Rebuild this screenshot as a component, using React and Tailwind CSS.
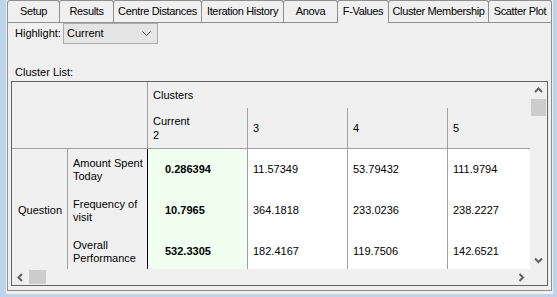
import React from 'react';

const tabs = [
  { label: 'Setup', cls: 'w-[53px]' },
  { label: 'Results', cls: 'w-[55px]' },
  { label: 'Centre Distances', cls: 'w-[89px]' },
  { label: 'Iteration History', cls: 'w-[83px]' },
  { label: 'Anova', cls: 'w-[55px]' },
  { label: 'F-Values', cls: 'w-[52px]', active: true },
  { label: 'Cluster Membership', cls: 'w-[101px]' },
  { label: 'Scatter Plot', cls: 'w-[64px]' },
];

const rows = [
  { label: ['Amount Spent', 'Today'], cur: '0.286394', vals: ['11.57349', '53.79432', '111.9794'] },
  { label: ['Frequency of', 'visit'], cur: '10.7965', vals: ['364.1818', '233.0236', '238.2227'] },
  { label: ['Overall', 'Performance'], cur: '532.3305', vals: ['182.4167', '119.7506', '142.6521'] },
];

function Chevron({ dir }) {
  const pts = {
    up: '1,5 4.5,1.5 8,5',
    down: '1,1.5 4.5,5 8,1.5',
    left: '5,1 1.5,4.5 5,8',
    right: '1.5,1 5,4.5 1.5,8',
  }[dir];
  const vertical = dir === 'up' || dir === 'down';
  return (
    <svg width={vertical ? 9 : 7} height={vertical ? 7 : 9} viewBox={vertical ? '0 0 9 7' : '0 0 7 9'}>
      <polyline points={pts} fill="none" stroke="#606060" strokeWidth="2" />
    </svg>
  );
}

function Tab({ tab }) {
  return (
    <div
      className={
        tab.cls +
        ' -ml-px first:ml-0 shrink-0 flex items-start justify-center pt-[4px] whitespace-nowrap tracking-[-0.35px] border-t border-l border-r border-[#8e8f8f] rounded-t-[3px] bg-[#f0f0f0] ' +
        (tab.active ? 'h-[23px] relative z-10' : 'h-[22px]')
      }
    >
      {tab.label}
    </div>
  );
}

export default function App() {
  return (
    <div className="w-[557px] h-[297px] bg-[#bed4eb] pl-[6px] pr-[4px] pb-[3px] font-['Liberation_Sans',Arial,sans-serif] text-[11px] leading-[13px] text-black">
      <div className="h-full bg-[#f0f0f0] flex flex-col">
        <div className="h-[22px] flex items-start pl-[1px] shrink-0">
          {tabs.map((t) => (
            <Tab key={t.label} tab={t} />
          ))}
        </div>

        <div className="ml-[1px] w-[545px] h-[269px] border border-[#8e8f8f] flex flex-col">
          <div className="flex items-center h-[21px]">
            <div className="w-[55px] pl-[7px]">Highlight:</div>
            <div className="w-[95px] h-[21px] border border-[#adadad] bg-[#e5e5e5] flex items-center justify-between pl-[3px] pr-[6px]">
              <span>Current</span>
              <svg width="9" height="5" viewBox="0 0 9 5">
                <polyline points="0.5,0.5 4.5,4.5 8.5,0.5" fill="none" stroke="#404040" strokeWidth="1" />
              </svg>
            </div>
          </div>

          <div className="mt-[22px] pl-[7px]">Cluster List:</div>

          <div className="mt-[2px] ml-[3px] w-[537px] h-[205px] border border-[#646464] flex flex-col bg-[#f0f0f0]">
            <div className="flex h-[187px] shrink-0">
              <div className="w-[518px] h-[187px] overflow-hidden flex flex-col">
                <div className="flex h-[67px] shrink-0 border-b border-[#a0a0a0] bg-[#f0f0f0]">
                  <div className="w-[136px] shrink-0 border-r border-[#a0a0a0]" />
                  <div className="flex flex-col flex-1">
                    <div className="h-[26px] flex items-center pl-[5px]">Clusters</div>
                    <div className="flex flex-1 leading-[14px]">
                      <div className="w-[100px] shrink-0 border-r border-[#a0a0a0] flex flex-col justify-center pl-[5px]">
                        <span>Current</span>
                        <span>2</span>
                      </div>
                      <div className="w-[100px] shrink-0 border-r border-[#a0a0a0] flex items-center pl-[5px]">3</div>
                      <div className="w-[100px] shrink-0 border-r border-[#a0a0a0] flex items-center pl-[5px]">4</div>
                      <div className="flex-1 flex items-center pl-[5px]">5</div>
                    </div>
                  </div>
                </div>

                <div className="flex flex-1">
                  <div className="w-[56px] shrink-0 border-r border-[#a0a0a0] bg-[#f0f0f0]">
                    <div className="h-[123px] flex items-center pl-[6px]">Question</div>
                  </div>
                  <div className="w-[80px] shrink-0 border-r border-black bg-[#f0f0f0]">
                    {rows.map((r) => (
                      <div key={r.cur} className="h-[41px] flex flex-col justify-center pl-[5px] leading-[13px]">
                        <span>{r.label[0]}</span>
                        <span>{r.label[1]}</span>
                      </div>
                    ))}
                  </div>
                  <div className="w-[100px] shrink-0 border-r border-[#a0a0a0] bg-[#f0fff0]">
                    {rows.map((r) => (
                      <div key={r.cur} className="h-[41px] flex items-center pl-[17px] font-bold">
                        {r.cur}
                      </div>
                    ))}
                  </div>
                  <div className="w-[100px] shrink-0 border-r border-[#a0a0a0] bg-white">
                    {rows.map((r) => (
                      <div key={r.cur} className="h-[41px] flex items-center pl-[5px]">{r.vals[0]}</div>
                    ))}
                  </div>
                  <div className="w-[100px] shrink-0 border-r border-[#a0a0a0] bg-white">
                    {rows.map((r) => (
                      <div key={r.cur} className="h-[41px] flex items-center pl-[5px]">{r.vals[1]}</div>
                    ))}
                  </div>
                  <div className="flex-1 bg-white">
                    {rows.map((r) => (
                      <div key={r.cur} className="h-[41px] flex items-center pl-[5px]">{r.vals[2]}</div>
                    ))}
                  </div>
                </div>
              </div>

              <div className="w-[17px] flex flex-col bg-[#f0f0f0]">
                <div className="h-[17px] flex items-center justify-center"><Chevron dir="up" /></div>
                <div className="h-[17px] mx-[1px] bg-[#cdcdcd]" />
                <div className="flex-1" />
                <div className="h-[17px] flex items-center justify-center"><Chevron dir="down" /></div>
              </div>
            </div>

            <div className="flex flex-1">
              <div className="w-[518px] flex bg-[#f0f0f0]">
                <div className="w-[17px] flex items-center justify-center"><Chevron dir="left" /></div>
                <div className="w-[17px] my-[1px] bg-[#cdcdcd]" />
                <div className="flex-1" />
                <div className="w-[17px] flex items-center justify-center"><Chevron dir="right" /></div>
              </div>
              <div className="w-[17px] bg-[#f0f0f0]" />
            </div>
          </div>
        </div>
      </div>
    </div>
  );
}
